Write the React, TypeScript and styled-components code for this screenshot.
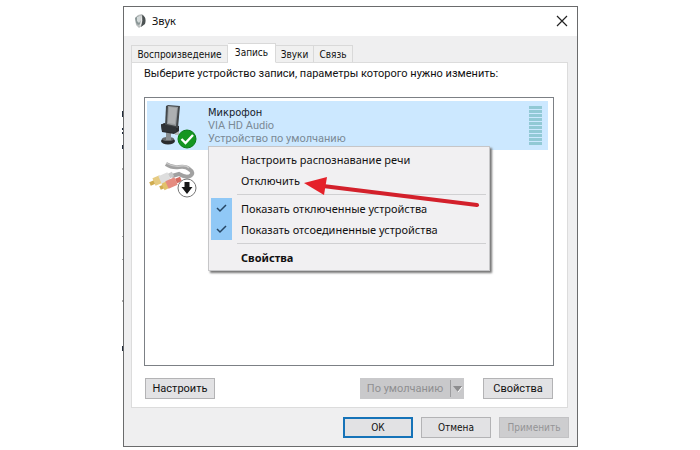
import React from "react";
import styled, { createGlobalStyle, css } from "styled-components";

const GlobalStyle = createGlobalStyle`
  * { box-sizing: border-box; }
  body { margin: 0; background: #fff; color: #111; font: 11px/13px Roboto, "Noto Sans", sans-serif; }
  button { font: inherit; color: inherit; margin: 0; padding: 0; white-space: nowrap; }
`;

const Page = styled.main`
  padding: 6px 122px 4px 123px;
`;

const Dialog = styled.section`
  position: relative;
  display: flex;
  flex-direction: column;
  background: #efeff0;
  border: 1px solid #6a6b6c;
`;

const BehindEdge = styled.svg`
  position: absolute;
  left: -2px;
  top: 0;
`;

const TitleBar = styled.header`
  display: flex;
  align-items: center;
  height: 29px;
  padding: 0 9px 2px 10px;
  gap: 6px;
  background: #fff;
`;

const Title = styled.h1`
  flex: 1;
  margin: 0;
  font: 400 11px/15px "Noto Sans", sans-serif;
`;

const CloseButton = styled.button`
  display: flex;
  border: 0;
  background: none;
`;

const Tabs = styled.div`
  display: flex;
  align-items: flex-end;
  height: 27px;
  padding: 0 7px;
  margin-bottom: -1px;
`;

const Tab = styled.button<{ $active?: boolean; $width: number }>`
  width: ${(p) => p.$width}px;
  height: 18px;
  border: 1px solid #d9d9d9;
  border-left-width: 0;
  background: #f0f0f0;
  font-family: "DejaVu Sans Condensed", "DejaVu Sans", sans-serif;
  font-size: 10px;
  &:first-child { border-left-width: 1px; }
  ${(p) => p.$active && css`
    height: 20px;
    padding-bottom: 2px;
    border-bottom-color: #fff;
    background: #fff;
    z-index: 1;
  `}
`;

const Panel = styled.div`
  margin: 0 9px 0 7px;
  padding: 3px 13px 8px 12px;
  background: #fff;
  border: 1px solid #dcdcdc;
`;

const Prompt = styled.p`
  margin: 0 0 16px;
  line-height: 15px;
  white-space: nowrap;
`;

const DeviceList = styled.div`
  position: relative;
  height: 269px;
  padding: 3px 5px 3px 2px;
  border: 1px solid #7c8085;
`;

const Device = styled.div<{ $selected?: boolean }>`
  display: flex;
  height: 49px;
  padding: 5px 6px 0 12px;
  gap: 7px;
  background: ${(p) => (p.$selected ? "#cce8ff" : "#fff")};
`;

const DeviceIcon = styled.svg`
  flex: none;
  width: 42px;
  height: 42px;
  overflow: visible;
`;

const DeviceText = styled.div`
  flex: 1;
  line-height: 13px;
  color: #7b8a96;
`;

const DeviceName = styled.div`
  color: #16202a;
  font-family: "DejaVu Sans Condensed", "DejaVu Sans", sans-serif;
`;

const Meter = styled.div`
  display: flex;
  flex-direction: column;
  gap: 1px;
  width: 13px;
`;

const MeterBar = styled.span`
  height: 3px;
  background: #91c9d5;
`;

const Menu = styled.div`
  position: absolute;
  left: 63px;
  top: 48px;
  width: 282px;
  padding: 2px;
  border: 1px solid #c6c6c8;
  background: #f1f0f2;
  box-shadow: 2px 2px 2px #777;
  font-family: "Noto Sans", sans-serif;
`;

const MenuItem = styled.button<{ $strong?: boolean }>`
  display: flex;
  align-items: center;
  width: 100%;
  height: 21px;
  gap: 9px;
  border: 0;
  background: none;
  text-align: left;
  font-weight: ${(p) => (p.$strong ? 700 : 400)};
`;

const CheckSlot = styled.span<{ $checked?: boolean }>`
  display: flex;
  align-items: center;
  justify-content: center;
  width: 21px;
  height: 100%;
  background: ${(p) => (p.$checked ? "#90c8f6" : "transparent")};
`;

const Separator = styled.hr`
  height: 1px;
  margin: 3px 1px 3px 26px;
  border: 0;
  background: #d0d0d2;
`;

const Arrow = styled.svg`
  position: absolute;
  left: 158px;
  top: 76px;
`;

const ButtonRow = styled.div`
  display: flex;
  gap: 19px;
  padding: 12px 1px 0;
`;

const Spacer = styled.span`
  flex: 1;
`;

const PushButton = styled.button<{ $primary?: boolean }>`
  width: 70px;
  height: 21px;
  border: ${(p) => (p.$primary ? "2px solid #1673b8" : "1px solid #b3b3b5")};
  background: #e2e2e4;
  &:disabled { color: #949496; background: #cdcdcf; border-color: #c2c2c4; }
`;

const SplitButton = styled.div`
  display: flex;
  width: 104px;
  height: 21px;
  background: #c9c9cb;
  color: #8f8f91;
`;

const SplitMain = styled.button`
  flex: 1;
  border: 0;
  background: none;
  color: inherit;
`;

const SplitToggle = styled.button`
  display: flex;
  align-items: center;
  justify-content: center;
  width: 14px;
  height: 17px;
  margin-top: 2px;
  border: 0;
  border-left: 1px solid #9d9d9f;
  background: none;
`;

const Footer = styled.footer`
  display: flex;
  justify-content: flex-end;
  gap: 8px;
  padding: 9px 8px 8px;
  font-family: "DejaVu Sans Condensed", "DejaVu Sans", sans-serif;
  font-size: 10px;
`;

function SpeakerIcon() {
  return (
    <svg width="12" height="14" viewBox="0 0 12 14" aria-hidden="true">
      <path d="M1 4 4 1 8 0 10 2 9 11 5 14 2 11Z" fill="#b9bdbd" />
      <path d="M1 4 4 2 6 4 6 10 4 11 2 9Z" fill="#8b9797" />
      <path d="M3 3 6 2 7 6 5 9 3 7Z" fill="#d4dada" />
      <path d="M8 1Q13 3 11 10L7 13Q9 7 8 1" fill="#4b5152" />
      <path d="M7 2Q9 7 6 12" fill="none" stroke="#eee" />
    </svg>
  );
}

function MicrophoneIcon() {
  return (
    <DeviceIcon viewBox="0 0 42 42" aria-hidden="true">
      <ellipse cx="9" cy="35" rx="7" ry="3.5" fill="#292b2d" />
      <ellipse cx="9" cy="33" rx="6" ry="2" fill="#66696c" />
      <path d="M7 25h5v9H7Z" fill="#898f93" />
      <path d="M16 23h4v6h-4Z" fill="#b5babd" />
      <path d="M2 19 5 17 20 20 20 25 15 28 3 26Z" fill="#292b2e" />
      <path d="M7 0 9-1 21 0 19 22 6 20Z" fill="#44484b" />
      <path d="M9 0 19 1 17 20 8 18Z" fill="#969a9d" />
      <path d="M10 1 18 2 16 18 9 17Z" fill="#adb0b2" />
      <path d="m2 18 15 3v6L3 25Z" fill="#303438" />
      <circle cx="28" cy="33" r="9" fill="#159622" stroke="#087a17" />
      <path d="m22.5 33 4 4 7.5-8" fill="none" stroke="#fff" strokeWidth="2.4" />
    </DeviceIcon>
  );
}

function LineInIcon() {
  return (
    <DeviceIcon viewBox="0 0 42 42" aria-hidden="true">
      <path d="M7 9Q13 13 20 12T30 14Q36 18 31 21Q27 23 20 19L13 21" fill="none" stroke="#a1a1a1" strokeWidth="4" />
      <path d="M7 8Q14 12 21 11T30 13" fill="none" stroke="#c9c9c9" strokeWidth="1.4" />
      <path d="m-9 29 7-3" stroke="#d0ac50" strokeWidth="4" />
      <path d="m-5 27 7-3" stroke="#e6cb82" strokeWidth="8" />
      <path d="m1 25 9-4" stroke="#dedede" strokeWidth="8" />
      <path d="m10 21 4-2" stroke="#c9c9c9" strokeWidth="5" />
      <path d="m1 33 5-2" stroke="#d0ac50" strokeWidth="4" />
      <path d="m4 32 6-3" stroke="#e2c26b" strokeWidth="7" />
      <path d="m8 30 9-4" stroke="#e58c80" strokeWidth="8" />
      <path d="m17 26 5-2" stroke="#d56c61" strokeWidth="5" />
      <circle cx="28" cy="33" r="9" fill="#fff" stroke="#777" />
      <path d="M25.5 27h5v5h3L28 39l-5.5-7h3Z" fill="#171717" />
    </DeviceIcon>
  );
}

function CheckIcon() {
  return (
    <svg width="11" height="9" viewBox="0 0 11 9" aria-hidden="true">
      <path d="m1 4 3 3 6-6" fill="none" stroke="#254563" strokeWidth="1.5" />
    </svg>
  );
}

function ContextMenu() {
  return (
    <Menu role="menu">
      <MenuItem role="menuitem"><CheckSlot />Настроить распознавание речи</MenuItem>
      <MenuItem role="menuitem"><CheckSlot />Отключить</MenuItem>
      <Separator />
      <MenuItem role="menuitemcheckbox" aria-checked="true"><CheckSlot $checked><CheckIcon /></CheckSlot>Показать отключенные устройства</MenuItem>
      <MenuItem role="menuitemcheckbox" aria-checked="true"><CheckSlot $checked><CheckIcon /></CheckSlot>Показать отсоединенные устройства</MenuItem>
      <Separator />
      <MenuItem role="menuitem" $strong><CheckSlot />Свойства</MenuItem>
    </Menu>
  );
}

export default function App() {
  return (
    <>
      <GlobalStyle />
      <Page>
        <Dialog role="dialog" aria-labelledby="sound-title">
          <BehindEdge width="1" height="360" aria-hidden="true">
            <path d="M.5 104v6m0 11v2m0 2v2m0 11v4m0 197v5" stroke="#222c3c" />
            <path d="M.5 161v2m0 66v1m0 22v1m0 40v2" stroke="#aaa" />
          </BehindEdge>
          <TitleBar>
            <SpeakerIcon />
            <Title id="sound-title">Звук</Title>
            <CloseButton aria-label="Закрыть">
              <svg width="12" height="12" viewBox="0 0 12 12" aria-hidden="true">
                <path d="m1 1 10 10M11 1 1 11" stroke="#222" strokeWidth="1.2" />
              </svg>
            </CloseButton>
          </TitleBar>
          <Tabs role="tablist">
            <Tab role="tab" $width={97}>Воспроизведение</Tab>
            <Tab role="tab" aria-selected="true" $active $width={48}>Запись</Tab>
            <Tab role="tab" $width={38}>Звуки</Tab>
            <Tab role="tab" $width={39}>Связь</Tab>
          </Tabs>
          <Panel role="tabpanel">
            <Prompt>Выберите устройство записи, параметры которого нужно изменить:</Prompt>
            <DeviceList>
              <Device $selected>
                <MicrophoneIcon />
                <DeviceText>
                  <DeviceName>Микрофон</DeviceName>
                  <div>VIA HD Audio</div>
                  <div>Устройство по умолчанию</div>
                </DeviceText>
                <Meter>
                  {Array.from({ length: 10 }, (_, i) => <MeterBar key={i} />)}
                </Meter>
              </Device>
              <Device><LineInIcon /></Device>
              <ContextMenu />
              <Arrow width="180" height="36" viewBox="0 0 180 36" aria-hidden="true">
                <path d="m20 12 154 19" stroke="#d3202b" strokeWidth="4" strokeLinecap="round" />
                <path d="m1 9 23-6-3 18Z" fill="#e5212a" />
              </Arrow>
            </DeviceList>
            <ButtonRow>
              <PushButton>Настроить</PushButton>
              <Spacer />
              <SplitButton>
                <SplitMain disabled>По умолчанию</SplitMain>
                <SplitToggle disabled aria-label="Варианты по умолчанию">
                  <svg width="9" height="6" viewBox="0 0 9 6" aria-hidden="true">
                    <path d="M0 0h9L5 6Z" fill="#8c8c8e" />
                    <path d="m5 6 4-5" stroke="#fff" />
                  </svg>
                </SplitToggle>
              </SplitButton>
              <PushButton>Свойства</PushButton>
            </ButtonRow>
          </Panel>
          <Footer>
            <PushButton $primary>ОК</PushButton>
            <PushButton>Отмена</PushButton>
            <PushButton disabled>Применить</PushButton>
          </Footer>
        </Dialog>
      </Page>
    </>
  );
}
